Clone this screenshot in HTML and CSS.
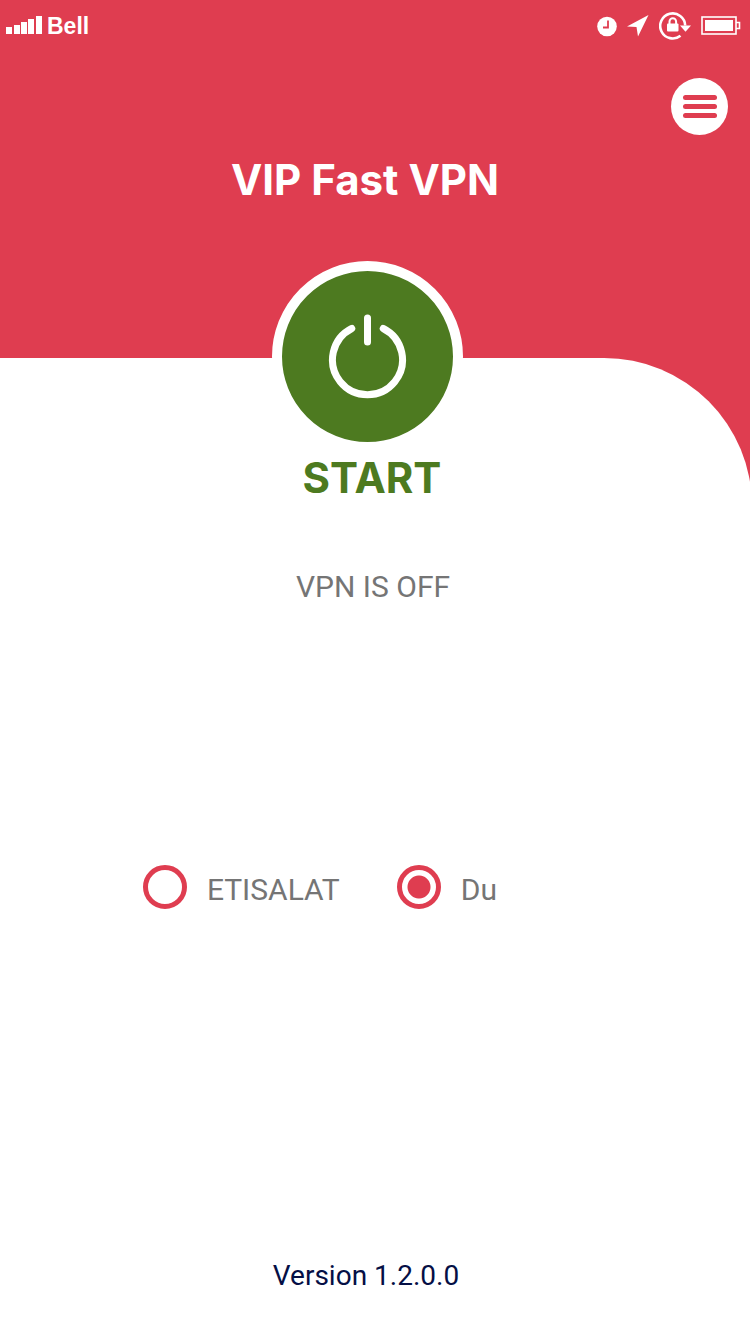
FILE: index.html
```html
<!DOCTYPE html>
<html lang="en">

<head>
    <meta charset="UTF-8">
    <meta name="viewport" content="width=device-width, initial-scale=1.0">
    <title>VIP Fast VPN</title>
    <link rel="stylesheet" href="styles.css">
</head>

<body>

    <header class="header">
        <div class="status-bar">
            <div class="carrier">
                <svg width="36" height="20" viewBox="0 0 36 20" fill="#fff">
                    <rect x="0" y="11" width="6" height="7" />
                    <rect x="8" y="9" width="6" height="9" />
                    <rect x="15" y="6" width="6" height="12" />
                    <rect x="22" y="3" width="6" height="15" />
                    <rect x="30" y="0" width="6" height="18" />
                </svg>
                <span>Bell</span>
            </div>
            <div class="status-icons">
                <!-- alarm, location, rotation lock, battery -->
                <svg width="20" height="22" viewBox="0 0 20 22">
                    <circle cx="10" cy="11.500" r="9.8" fill="#fff" />
                    <path d="M11 5.500V12.500H6" fill="none" stroke="#df3d50" stroke-width="1.8" />
                </svg>
                <svg width="22" height="22" viewBox="0 0 22 22">
                    <path d="M21.500 0L11 21.500L9.500 12L0 11.500Z" fill="#fff" />
                </svg>
                <svg width="32" height="28" viewBox="0 0 32 28" fill="#fff">
                    <path d="M21.500 23.700A12.500 12.500 0 1 1 26.200 13.500" fill="none" stroke="#fff" stroke-width="2.600" />
                    <path d="M21 13.500H32L26.500 19.800Z" />
                    <rect x="8" y="11.500" width="11.500" height="8" rx="1" />
                    <path d="M10.500 13V9.500A3.300 3.300 0 0 1 17.100 9.500V13" fill="none" stroke="#fff" stroke-width="2" />
                </svg>
                <svg width="40" height="20" viewBox="0 0 40 20" fill="#fff">
                    <rect x="1" y="1" width="34" height="17" fill="none" stroke="#fff" stroke-width="1.600" />
                    <rect x="4" y="4" width="28" height="11" />
                    <path d="M35 6.500H38.500V12.500H35" fill="none" stroke="#fff" stroke-width="1.600" />
                </svg>
            </div>
        </div>

        <div class="toolbar">
            <button class="menu-btn" type="button" aria-label="Menu">
                <span></span>
                <span></span>
                <span></span>
            </button>
        </div>

        <h1 class="title">VIP Fast VPN</h1>
    </header>

    <main class="sheet">
        <div class="power">
            <button class="power-btn" type="button" aria-label="Start VPN">
                <svg width="81" height="87" viewBox="0 0 81 87" fill="none" stroke="#fff" stroke-width="7" stroke-linecap="round">
                    <path d="M40.500 5V29" />
                    <path d="M24.800 15.500A35 35 0 1 0 56.200 15.500" />
                </svg>
            </button>
        </div>
        <h2 class="action">START</h2>
        <p class="state">VPN IS OFF</p>

        <form class="providers">
            <label class="provider">
                <input type="radio" name="provider" value="etisalat">
                <span>ETISALAT</span>
            </label>
            <label class="provider">
                <input type="radio" name="provider" value="du" checked>
                <span>Du</span>
            </label>
        </form>

        <footer class="version">Version 1.2.0.0</footer>
    </main>

</body>

</html>
```

FILE: styles.css
```css
* {
    margin: 0;
    padding: 0;
    box-sizing: border-box;
}

body {
    min-height: 100vh;
    display: flex;
    flex-direction: column;
    font-family: Roboto, sans-serif;
    background-color: #df3d50;
    overflow-x: hidden;
}

.status-bar {
    display: flex;
    justify-content: space-between;
    align-items: center;
    height: 52px;
    padding: 0 9px 0 6px;
}

.carrier {
    display: flex;
    align-items: center;
    gap: 5px;
    font-family: "Liberation Sans", sans-serif;
    font-size: 23px;
    font-weight: bold;
    line-height: 24px;
    color: white;
}

.status-icons {
    display: flex;
    align-items: center;
    gap: 10px;
}

.toolbar {
    display: flex;
    justify-content: flex-end;
    padding: 26px 22px 0;
}

.menu-btn {
    width: 57px;
    height: 57px;
    display: flex;
    flex-direction: column;
    justify-content: center;
    align-items: center;
    gap: 4px;
    border: none;
    border-radius: 50%;
    background-color: white;
    cursor: pointer;
}

.menu-btn span {
    width: 34px;
    height: 5px;
    border-radius: 3px;
    background-color: #df3d50;
}

.title {
    padding: 21px 20px 154px 0;
    font-family: Inter, sans-serif;
    font-size: 42px;
    font-weight: bold;
    line-height: 48px;
    text-align: center;
    color: white;
}

/* slightly wider than the screen so the curve runs off the edge */
.sheet {
    flex: 1;
    display: flex;
    flex-direction: column;
    margin-right: -2px;
    border-radius: 0 148px 0 0;
    background-color: white;
    text-align: center;
}

.power {
    display: flex;
    justify-content: center;
    margin-top: -97px;
    padding-right: 17px;
}

.power-btn {
    width: 191px;
    height: 191px;
    display: flex;
    justify-content: center;
    align-items: center;
    border: 10px solid white;
    border-radius: 50%;
    background-color: #4d7a20;
    cursor: pointer;
}

.action {
    margin-top: 2px;
    padding-right: 8px;
    font-family: Inter, sans-serif;
    font-size: 42px;
    line-height: 48px;
    color: #4d7a20;
}

.state {
    margin-top: 67px;
    padding-right: 6px;
    font-size: 30px;
    line-height: 36px;
    color: #757575;
}

.providers {
    display: flex;
    gap: 57px;
    margin-top: 260px;
    padding-left: 19%;
}

.provider {
    display: flex;
    align-items: center;
    gap: 20px;
    font-size: 30px;
    line-height: 36px;
    color: #757575;
}

.provider span {
    padding-top: 6px;
}

.provider input {
    appearance: none;
    width: 44px;
    height: 44px;
    border: 5px solid #df3d50;
    border-radius: 50%;
}

.provider input:checked {
    background: radial-gradient(circle, #df3d50 11px, white 12px);
}

.version {
    margin-top: auto;
    padding: 0 20px 41px 0;
    font-size: 28px;
    line-height: 34px;
    color: #050f45;
}
```
